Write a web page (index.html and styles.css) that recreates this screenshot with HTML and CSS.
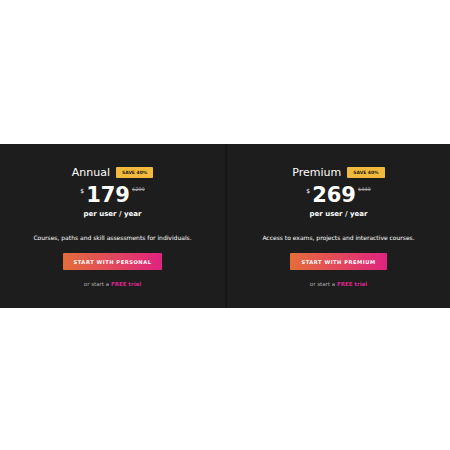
FILE: index.html
```html
<!DOCTYPE html>
<html lang="en">
<head>
    <meta charset="UTF-8">
    <meta name="viewport" content="width=device-width, initial-scale=1.0">
    <title>Pricing</title>
    <link rel="stylesheet" href="styles.css">
</head>
<body>
<div class="pricing">
    <div class="plan">
        <div class="plan-title">
            <span class="plan-name">Annual</span>
            <span class="badge">SAVE 40%</span>
        </div>
        <div class="price">
            <span class="currency">$</span>
            <span class="amount">179</span>
            <span class="old-price">$299</span>
        </div>
        <div class="period">per user / year</div>
        <p class="desc">Courses, paths and skill assessments for individuals.</p>
        <button class="cta">START WITH PERSONAL</button>
        <div class="trial">or start a <a href="#">FREE trial</a></div>
    </div>
    <div class="plan">
        <div class="plan-title">
            <span class="plan-name">Premium</span>
            <span class="badge">SAVE 40%</span>
        </div>
        <div class="price">
            <span class="currency">$</span>
            <span class="amount">269</span>
            <span class="old-price">$449</span>
        </div>
        <div class="period">per user / year</div>
        <p class="desc">Access to exams, projects and interactive courses.</p>
        <button class="cta">START WITH PREMIUM</button>
        <div class="trial">or start a <a href="#">FREE trial</a></div>
    </div>
</div>
</body>
</html>
```

FILE: styles.css
```css
body {
    margin: 0;
    background: #fff;
    font-family: "DejaVu Sans", "Liberation Sans", sans-serif;
}

.pricing {
    margin-top: 144px;
    height: 164px;
    display: grid;
    grid-template-columns: 1fr 1fr;
    background: #1d1d1d;
}

.plan {
    display: flex;
    flex-direction: column;
    align-items: center;
    padding-top: 22px;
    color: #fff;
}

.plan + .plan {
    border-left: 2px solid #171717;
}

.plan-title {
    display: flex;
    align-items: center;
    gap: 6px;
}

.plan-name {
    font-size: 11px;
    font-weight: 500;
}

.badge {
    background: #f1ba3c;
    color: #2a2210;
    font-size: 4.5px;
    font-weight: bold;
    padding: 3px 6px;
    border-radius: 1px;
}

.price {
    display: flex;
    align-items: flex-start;
    margin-top: 7px;
    height: 20px;
}

.currency {
    font-size: 6px;
    margin-top: 1px;
    margin-right: 2px;
}

.amount {
    font-size: 21px;
    font-weight: bold;
    line-height: 18px;
}

.old-price {
    font-size: 5px;
    color: #aaa;
    text-decoration: line-through;
    margin-top: 0;
    margin-left: 2px;
}

.period {
    font-size: 7px;
    font-weight: bold;
    margin-top: 4px;
}

.desc {
    font-size: 6px;
    margin: 16px 0 0;
}

.cta {
    margin-top: 12px;
    height: 17px;
    padding: 0 11px;
    border: none;
    border-radius: 1px;
    color: #fff;
    font-family: inherit;
    font-size: 5.2px;
    font-weight: bold;
    letter-spacing: 0.5px;
    background: linear-gradient(90deg, #e46d3a, #e0237f);
}

.trial {
    margin-top: 11px;
    font-size: 5.5px;
    color: #aaa;
}

.trial a {
    color: #d6278a;
    font-weight: bold;
    text-decoration: none;
}
```
